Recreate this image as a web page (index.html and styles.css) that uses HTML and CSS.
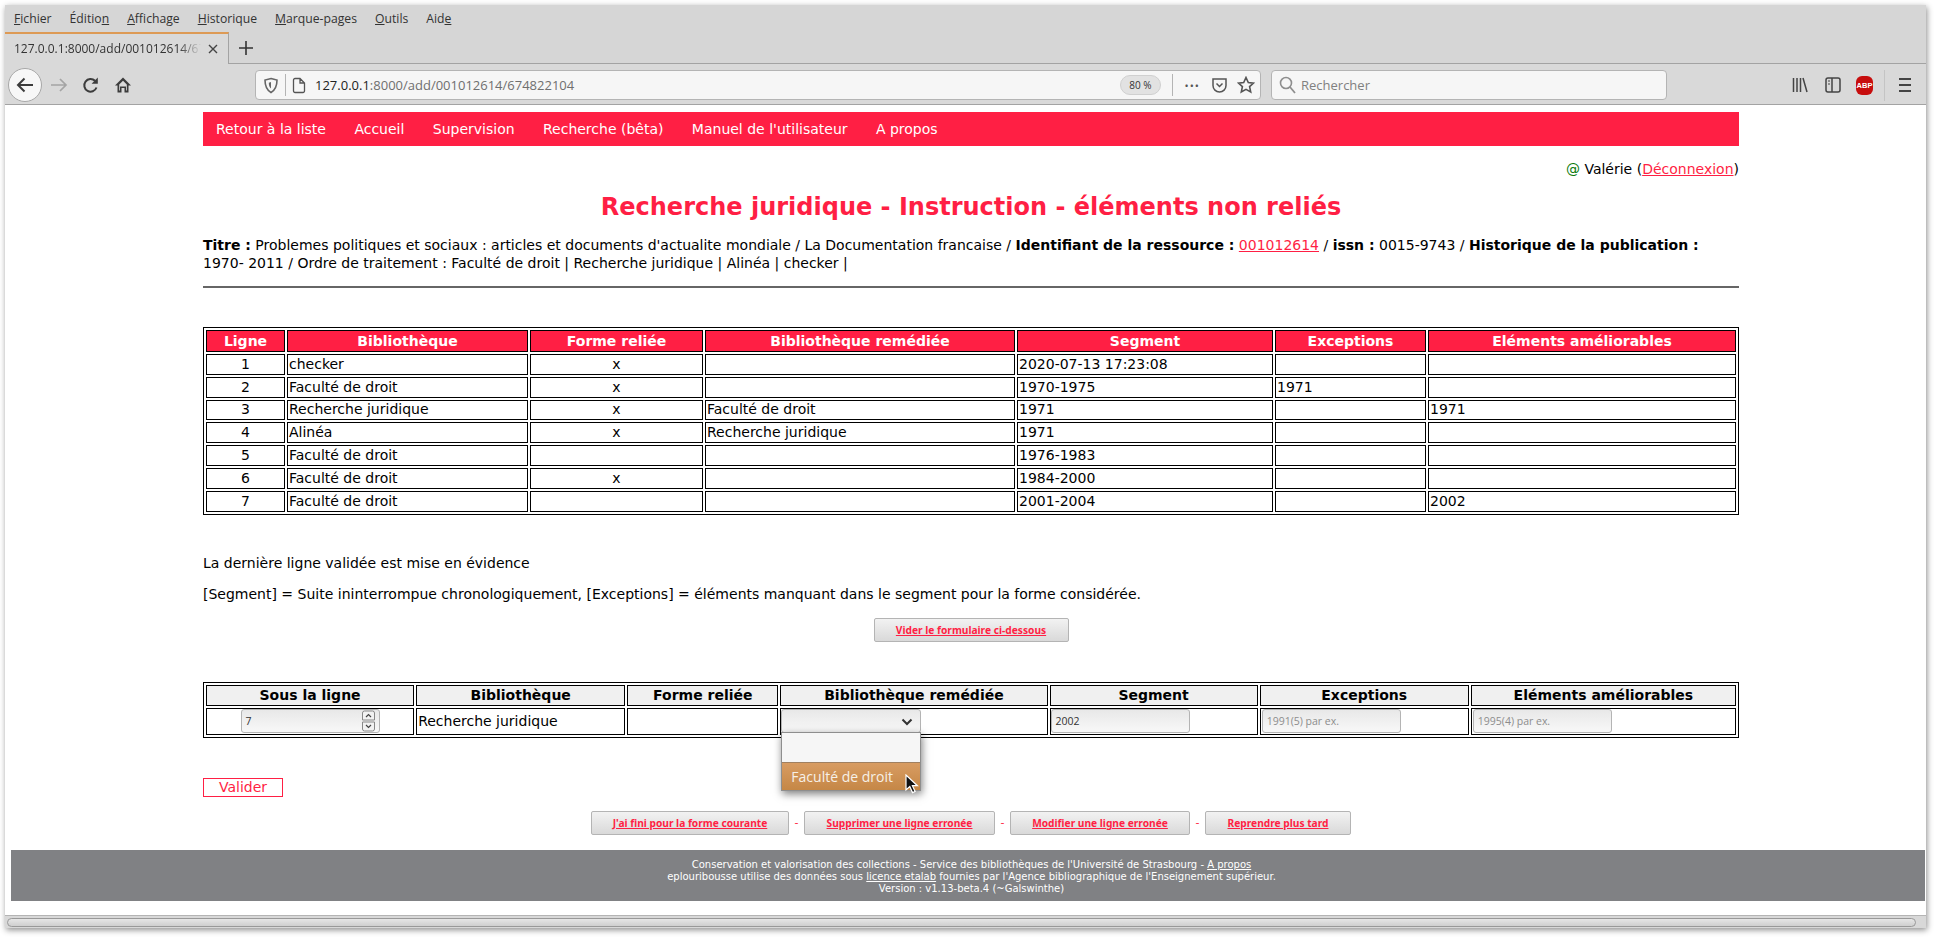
FILE: index.html
```html
<!DOCTYPE html>
<html lang="fr">
<head>
    <meta charset="UTF-8">
    <title>eplouribousse</title>
    <link rel="stylesheet" href="styles.css">
</head>
<body>
<div class="window">
    <div class="menubar">
        <span><u>F</u>ichier</span>
        <span>Éditio<u>n</u></span>
        <span><u>A</u>ffichage</span>
        <span><u>H</u>istorique</span>
        <span><u>M</u>arque-pages</span>
        <span><u>O</u>utils</span>
        <span>Aid<u>e</u></span>
    </div>
    <div class="tabstrip">
        <div class="tab">
            <span class="tab-title">127.0.0.1:8000/add/001012614/674822104</span>
            <svg class="tab-close" width="12" height="12" viewBox="0 0 12 12"><path d="M2 2l8 8M10 2l-8 8" stroke="#444" stroke-width="1.4" fill="none"/></svg>
        </div>
        <svg class="tab-new" width="16" height="16" viewBox="0 0 16 16"><path d="M8 1v14M1 8h14" stroke="#333" stroke-width="1.6" fill="none"/></svg>
    </div>
    <div class="toolbar">
        <div class="back-btn">
            <svg width="20" height="20" viewBox="0 0 20 20"><path d="M18 10H3M9.5 3.5L3 10l6.500 6.500" stroke="#3c3c3c" stroke-width="2" fill="none"/></svg>
        </div>
        <svg class="tool-icon" width="18" height="18" viewBox="0 0 18 18"><path d="M1 9h15M10 3l6 6-6 6" stroke="#a4a4a4" stroke-width="1.700" fill="none"/></svg>
        <svg class="tool-icon reload" width="18" height="18" viewBox="0 0 18 18"><path d="M14.500 11.500A6.300 6.300 0 1 1 13 4.800" stroke="#3c3c3c" stroke-width="2" fill="none"/><path d="M15.800 1.500v6.200H9.600z" fill="#3c3c3c"/></svg>
        <svg class="tool-icon home" width="18" height="18" viewBox="0 0 18 18"><path d="M9 1.500L1 9.500h2.500v7h4v-4.500h3v4.500h4v-7H17z" fill="#3c3c3c"/><path d="M9 4.800l-3.800 3.700v6h.8v-4h6v4h.8v-6z" fill="#d9d9d9"/></svg>
        <div class="urlbar">
            <svg class="shield" width="16" height="17" viewBox="0 0 16 17"><path d="M8 1.500l6 1.500c0 6-1.500 10-6 12.500C3.500 13 2 9 2 3z" stroke="#666" stroke-width="1.600" fill="none"/><path d="M8 5v6.500c-1.500-1-2.200-3-2.200-5.700z" fill="#666"/></svg>
            <span class="sep"></span>
            <svg class="page-icon" width="14" height="17" viewBox="0 0 14 17"><path d="M1.500 3a1.500 1.500 0 0 1 1.500-1.500h5l4.500 4.500v8a1.500 1.500 0 0 1-1.500 1.500h-8a1.500 1.500 0 0 1-1.500-1.500zM8 1.500v4.500h4.500" stroke="#555" stroke-width="1.300" fill="none"/></svg>
            <span class="url"><b>127.0.0.1</b>:8000/add/001012614/674822104</span>
            <span class="zoom-pill">80 %</span>
            <span class="sep sep-right"></span>
            <span class="dots">•••</span>
            <svg class="url-icon" width="17" height="17" viewBox="0 0 17 17"><path d="M2 2h13v6.500a6.500 6.500 0 0 1-13 0z" stroke="#555" stroke-width="1.500" fill="none"/><path d="M5.500 6.500l3 3 3-3" stroke="#555" stroke-width="1.500" fill="none"/></svg>
            <svg class="url-icon" width="18" height="18" viewBox="0 0 18 18"><path d="M9 1.500l2.300 5 5.200.6-3.900 3.500 1.100 5.400L9 13.300l-4.700 2.700 1.100-5.400-3.900-3.500 5.200-.6z" stroke="#555" stroke-width="1.600" fill="none"/></svg>
        </div>
        <div class="searchbar">
            <svg width="17" height="18" viewBox="0 0 17 18"><circle cx="7" cy="7" r="5.500" stroke="#8e8e8e" stroke-width="1.600" fill="none"/><path d="M11 11l5 6" stroke="#8e8e8e" stroke-width="1.800"/></svg>
            <span>Rechercher</span>
        </div>
        <div class="tools-right">
            <svg width="16" height="18" viewBox="0 0 16 18"><path d="M1.500 2v14M5 2v14M8.500 2v14M11 2l4 14" stroke="#444" stroke-width="1.500" fill="none"/></svg>
            <svg width="16" height="18" viewBox="0 0 16 18"><rect x="1" y="2" width="14" height="14" rx="2" stroke="#444" stroke-width="1.500" fill="none"/><path d="M7 2v14" stroke="#444" stroke-width="1.500"/><path d="M3 5h2M3 8h2" stroke="#444" stroke-width="1.200"/></svg>
            <span class="abp">ABP</span>
            <span class="tools-sep"></span>
            <svg width="14" height="16" viewBox="0 0 14 16"><path d="M1 2h12M1 8h12M1 14h12" stroke="#444" stroke-width="2" fill="none"/></svg>
        </div>
    </div>

    <div class="page">
        <div class="content">
            <ul class="nav">
                <li>Retour à la liste</li>
                <li>Accueil</li>
                <li>Supervision</li>
                <li>Recherche (bêta)</li>
                <li>Manuel de l'utilisateur</li>
                <li>A propos</li>
            </ul>
            <p class="user"><span class="at">@</span> Valérie (<a href="#">Déconnexion</a>)</p>
            <h1>Recherche juridique - Instruction - éléments non reliés</h1>
            <p class="info"><b>Titre :</b> Problemes politiques et sociaux : articles et documents d'actualite mondiale / La Documentation francaise / <b>Identifiant de la ressource :</b> <a href="#">001012614</a> / <b>issn :</b> 0015-9743 / <b>Historique de la publication :</b> 1970- 2011 / Ordre de traitement : Faculté de droit | Recherche juridique | Alinéa | checker |</p>
            <hr>

            <table class="grid grid-main">
                <colgroup>
                    <col class="c1"><col class="c2"><col class="c3"><col class="c4"><col class="c5"><col class="c6"><col class="c7">
                </colgroup>
                <tr><th>Ligne</th><th>Bibliothèque</th><th>Forme reliée</th><th>Bibliothèque remédiée</th><th>Segment</th><th>Exceptions</th><th>Eléments améliorables</th></tr>
                <tr><td class="mid">1</td><td>checker</td><td class="mid">x</td><td></td><td>2020-07-13 17:23:08</td><td></td><td></td></tr>
                <tr><td class="mid">2</td><td>Faculté de droit</td><td class="mid">x</td><td></td><td>1970-1975</td><td>1971</td><td></td></tr>
                <tr><td class="mid">3</td><td>Recherche juridique</td><td class="mid">x</td><td>Faculté de droit</td><td>1971</td><td></td><td>1971</td></tr>
                <tr><td class="mid">4</td><td>Alinéa</td><td class="mid">x</td><td>Recherche juridique</td><td>1971</td><td></td><td></td></tr>
                <tr><td class="mid">5</td><td>Faculté de droit</td><td class="mid"></td><td></td><td>1976-1983</td><td></td><td></td></tr>
                <tr><td class="mid">6</td><td>Faculté de droit</td><td class="mid">x</td><td></td><td>1984-2000</td><td></td><td></td></tr>
                <tr><td class="mid">7</td><td>Faculté de droit</td><td class="mid"></td><td></td><td>2001-2004</td><td></td><td>2002</td></tr>
            </table>

            <p class="note note-first">La dernière ligne validée est mise en évidence</p>
            <p class="note">[Segment] = Suite ininterrompue chronologiquement, [Exceptions] = éléments manquant dans le segment pour la forme considérée.</p>

            <div class="btn-row btn-row-clear"><span class="btn btn-clear">Vider le formulaire ci-dessous</span></div>

            <table class="grid grid-form">
                <colgroup>
                    <col class="f1"><col class="f2"><col class="f3"><col class="f4"><col class="f5"><col class="f6"><col class="f7">
                </colgroup>
                <tr><th>Sous la ligne</th><th>Bibliothèque</th><th>Forme reliée</th><th>Bibliothèque remédiée</th><th>Segment</th><th>Exceptions</th><th>Eléments améliorables</th></tr>
                <tr class="form-row">
                    <td class="mid">
                        <span class="field field-number">7
                            <span class="spin">
                                <svg width="13" height="22" viewBox="0 0 13 22"><path d="M.5 10V3a2 2 0 0 1 2-2h8a2 2 0 0 1 2 2v7zM.5 12h12v7a2 2 0 0 1-2 2h-8a2 2 0 0 1-2-2z" stroke="#888" fill="#f2f2f2"/><path d="M4 7l2.500-2.500L9 7M4 15l2.500 2.500L9 15" stroke="#444" stroke-width="1.200" fill="none"/></svg>
                            </span>
                        </span>
                    </td>
                    <td>Recherche juridique</td>
                    <td></td>
                    <td class="select-cell">
                        <span class="field field-select">
                            <svg width="12" height="8" viewBox="0 0 12 8"><path d="M1.500 1.500L6 6l4.500-4.500" stroke="#333" stroke-width="2" fill="none"/></svg>
                        </span>
                        <div class="dropdown">
                            <div class="opt-blank"></div>
                            <div class="opt-active">Faculté de droit</div>
                            <svg class="cursor" width="16" height="20" viewBox="0 0 16 20"><path d="M1 1v15l3.800-3.400 2.700 6 2.600-1.100-2.700-5.800h5z" fill="#111" stroke="#fff" stroke-width="1.200"/></svg>
                        </div>
                    </td>
                    <td class="segment-cell"><span class="field">2002</span></td>
                    <td><span class="field field-empty">1991(5) par ex.</span></td>
                    <td><span class="field field-empty">1995(4) par ex.</span></td>
                </tr>
            </table>

            <span class="validate">Valider</span>

            <div class="btn-row btn-row-actions">
                <span class="btn btn-done">J'ai fini pour la forme courante</span>
                <span class="dash">-</span>
                <span class="btn btn-delete">Supprimer une ligne erronée</span>
                <span class="dash">-</span>
                <span class="btn btn-edit">Modifier une ligne erronée</span>
                <span class="dash">-</span>
                <span class="btn btn-later">Reprendre plus tard</span>
            </div>
        </div>

        <div class="footer">
            Conservation et valorisation des collections - Service des bibliothèques de l'Université de Strasbourg - <u>A propos</u><br>
            eplouribousse utilise des données sous <u>licence etalab</u> fournies par l'Agence bibliographique de l'Enseignement supérieur.<br>
            Version : v1.13-beta.4 (~Galswinthe)
        </div>
    </div>

    <div class="hscroll"><div class="hscroll-thumb"></div></div>
</div>
</body>
</html>
```

FILE: styles.css
```css
html, body {
    margin: 0;
    height: 100%;
    background-color: #fff;
    overflow: hidden;
}
body {
    font-family: "DejaVu Sans", sans-serif;
    font-size: 14px;
    color: #000;
}

/* browser window */
.window {
    display: flex;
    flex-direction: column;
    width: 1921px;
    height: 923px;
    margin: 5px 0 0 5px;
    box-shadow: 1px 2px 6px rgba(0, 0, 0, 0.45);
    background-color: #fff;
}
.menubar {
    display: flex;
    align-items: center;
    gap: 18px;
    height: 27px;
    padding-left: 9px;
    background-color: #d6d6d6;
    font-family: "Open Sans", sans-serif;
    font-size: 12.2px;
    color: #333;
}
.tabstrip {
    display: flex;
    align-items: center;
    height: 32px;
    background-color: #d6d6d6;
    border-bottom: 1px solid #a3a3a3;
    box-sizing: border-box;
}
.tab {
    display: flex;
    align-items: center;
    box-sizing: border-box;
    width: 224px;
    height: 32px;
    padding: 0 9px;
    gap: 6px;
    background-color: #d9d9d9;
    border-top: 2px solid #dd9a55;
    border-right: 1px solid #a3a3a3;
    font-family: "Open Sans", sans-serif;
    font-size: 12px;
    color: #333;
}
.tab-title {
    flex: 1;
    overflow: hidden;
    white-space: nowrap;
    -webkit-mask-image: linear-gradient(to right, #000 88%, transparent);
    mask-image: linear-gradient(to right, #000 88%, transparent);
}
.tab-new {
    margin-left: 9px;
}
.toolbar {
    position: relative;
    display: flex;
    align-items: center;
    box-sizing: border-box;
    height: 41px;
    padding-top: 2px;
    background-color: #d9d9d9;
    border-bottom: 1px solid #a3a3a3;
}
.back-btn {
    display: flex;
    align-items: center;
    justify-content: center;
    box-sizing: border-box;
    width: 34px;
    height: 34px;
    margin-left: 3px;
    border: 1px solid #a8a8a8;
    border-radius: 50%;
    background-color: #f7f7f7;
}
.tool-icon {
    margin-left: 8px;
}
.tool-icon.reload {
    margin-left: 14px;
}
.tool-icon.home {
    margin-left: 14px;
}
.urlbar, .searchbar {
    display: flex;
    align-items: center;
    box-sizing: border-box;
    height: 30px;
    border: 1px solid #b4b4b4;
    border-radius: 4px;
    background-color: #f6f6f6;
    font-family: "Open Sans", sans-serif;
    font-size: 13px;
}
.urlbar {
    width: 1006px;
    margin-left: 123px;
    padding-left: 7px;
}
.sep {
    width: 1px;
    height: 22px;
    margin: 0 6px;
    background-color: #b4b4b4;
}
.page-icon {
    margin-right: 9px;
}
.url {
    flex: 1;
    color: #6f6f6f;
}
.url b {
    font-weight: 400;
    color: #222;
}
.zoom-pill {
    padding: 2px 8px;
    border: 1px solid #d0d0d0;
    border-radius: 10px;
    background-color: #e2e2e2;
    font-size: 10px;
    color: #333;
}
.sep-right {
    margin: 0 12px 0 11px;
}
.dots {
    margin-right: 11px;
    font-size: 11px;
    letter-spacing: 1px;
    color: #555;
}
.url-icon {
    margin-right: 9px;
}
.url-icon:last-child {
    margin-right: 5px;
}
.searchbar {
    width: 396px;
    margin-left: 10px;
    padding-left: 7px;
    gap: 5px;
    color: #808080;
}
.tools-right {
    display: flex;
    align-items: center;
    margin-left: 125px;
}
.tools-right svg:nth-child(2) {
    margin-left: 17px;
}
.abp {
    display: flex;
    align-items: center;
    justify-content: center;
    width: 17px;
    height: 19px;
    margin-left: 15px;
    border-radius: 6px;
    background-color: #c70d0d;
    font-family: "Liberation Sans", sans-serif;
    font-size: 7.5px;
    font-weight: 700;
    color: #fff;
}
.tools-sep {
    width: 1px;
    height: 31px;
    margin: 0 13px 0 11px;
    background-color: #c4c4c4;
}

/* page */
.page {
    flex: 1;
    overflow: hidden;
    background-color: #fff;
}
.content {
    width: 1536px;
    margin-left: 198px;
    padding-top: 7px;
}
.nav {
    display: flex;
    align-items: center;
    gap: 28.4px;
    height: 34px;
    margin: 0;
    padding: 0 13px;
    list-style: none;
    background-color: #ff1f44;
    color: #fff;
}
.user {
    margin: 15px 0 0;
    text-align: right;
    line-height: 17px;
}
.at {
    color: #0a7a0a;
}
a {
    color: #ff1f44;
}
h1 {
    margin: 13px 0 0;
    text-align: center;
    font-size: 24px;
    line-height: 33px;
    color: #ff1f44;
}
.info {
    margin: 12px 0 0;
    line-height: 18px;
}
hr {
    height: 2px;
    margin: 14px 0 0;
    border: none;
    background-color: #666;
}

/* tables */
.grid {
    table-layout: fixed;
    width: 1536px;
    border-collapse: separate;
    border-spacing: 2px;
    border: 1px solid #000;
    line-height: 17px;
}
.grid th, .grid td {
    box-sizing: border-box;
    padding: 0 1px;
    border: 1px solid #000;
    white-space: nowrap;
}
.grid-main {
    margin-top: 39px;
}
.grid-main th {
    height: 22px;
    background-color: #ff1f44;
    color: #fff;
}
.grid-main td {
    height: 20.8px;
}
.grid .mid {
    text-align: center;
}
.c1 { width: 79px; }
.c2 { width: 241px; }
.c3 { width: 173px; }
.c4 { width: 310px; }
.c5 { width: 256px; }
.c6 { width: 151px; }
.c7 { width: 308px; }
.f1 { width: 208px; }
.f2 { width: 209px; }
.f3 { width: 151px; }
.f4 { width: 267px; }
.f5 { width: 208px; }
.f6 { width: 209px; }
.f7 { width: 265px; }

.note {
    margin: 0;
    line-height: 17px;
}
.note-first {
    margin-top: 40px;
}
.note + .note {
    margin-top: 14px;
}

/* buttons */
.btn-row {
    display: flex;
    align-items: center;
    justify-content: center;
}
.btn {
    display: flex;
    align-items: center;
    justify-content: center;
    box-sizing: border-box;
    height: 24px;
    border: 1px solid #b4b4b4;
    border-radius: 2px;
    background: linear-gradient(#f2f2f2, #d9d9d9);
    font-family: "Noto Sans", sans-serif;
    font-size: 10.2px;
    font-weight: 700;
    color: #ff1f44;
    text-decoration: underline;
}
.btn-row-clear {
    margin-top: 15px;
}
.btn-clear { width: 195px; }
.btn-done { width: 198px; }
.btn-delete { width: 191px; }
.btn-edit { width: 180px; }
.btn-later { width: 146px; }
.dash {
    width: 15px;
    text-align: center;
    color: #ff1f44;
    font-size: 11px;
}

/* form row */
.grid-form {
    margin-top: 40px;
}
.grid-form th {
    height: 21px;
    background-color: #f0f0f0;
}
.form-row td {
    height: 27px;
}
.field {
    position: relative;
    display: block;
    box-sizing: border-box;
    width: 139px;
    height: 24px;
    padding-left: 4px;
    border: 1px solid #b4b4b4;
    border-radius: 3px;
    background: linear-gradient(#e8e8e8, #f8f8f8);
    font-family: "Open Sans", sans-serif;
    font-size: 10.5px;
    line-height: 22px;
    text-align: left;
    color: #333;
}
.field-empty {
    color: #8d8d8d;
}
.field-number {
    margin: 0 auto;
}
.spin {
    position: absolute;
    top: 0;
    right: 4px;
    height: 22px;
    line-height: 0;
}
.grid .select-cell, .grid .segment-cell {
    position: relative;
    padding: 0;
}
.field-select {
    width: 140px;
}
.field-select svg {
    position: absolute;
    top: 8px;
    right: 7px;
}
.dropdown {
    position: absolute;
    top: 23px;
    left: 0;
    z-index: 2;
    width: 138px;
    border: 1px solid #8e8e8e;
    box-shadow: 1px 3px 8px rgba(0, 0, 0, 0.5);
    background-color: #f6f6f6;
    font-family: "Open Sans", sans-serif;
    font-size: 14px;
}
.opt-blank {
    height: 29px;
}
.opt-active {
    height: 28px;
    padding-left: 9px;
    border-top: 1px solid #a08060;
    box-sizing: border-box;
    line-height: 27px;
    background: linear-gradient(#d89c62, #c58746);
    color: #f6f0e8;
}
.cursor {
    position: absolute;
    top: 41px;
    left: 123px;
}
.validate {
    display: block;
    box-sizing: border-box;
    width: 80px;
    height: 19px;
    margin-top: 40px;
    border: 1px solid #ff1f44;
    text-align: center;
    line-height: 17px;
    color: #ff1f44;
}
.btn-row-actions {
    margin-top: 14px;
}

/* footer */
.footer {
    box-sizing: border-box;
    height: 51px;
    margin: 15px 1px 0 6px;
    padding: 9px 0 0 7px;
    background-color: #808184;
    text-align: center;
    font-family: "DejaVu Sans", sans-serif;
    font-size: 10px;
    line-height: 12px;
    color: #fff;
}

/* bottom scrollbar */
.hscroll {
    box-sizing: border-box;
    height: 13px;
    padding: 2px 10px 1px 2px;
    border-top: 1px solid #b4b4b4;
    background-color: #d8d8d8;
}
.hscroll-thumb {
    height: 100%;
    border: 1px solid #999;
    border-radius: 5px;
    box-sizing: border-box;
    background: linear-gradient(#e6e6e6, #cfcfcf);
}
```
